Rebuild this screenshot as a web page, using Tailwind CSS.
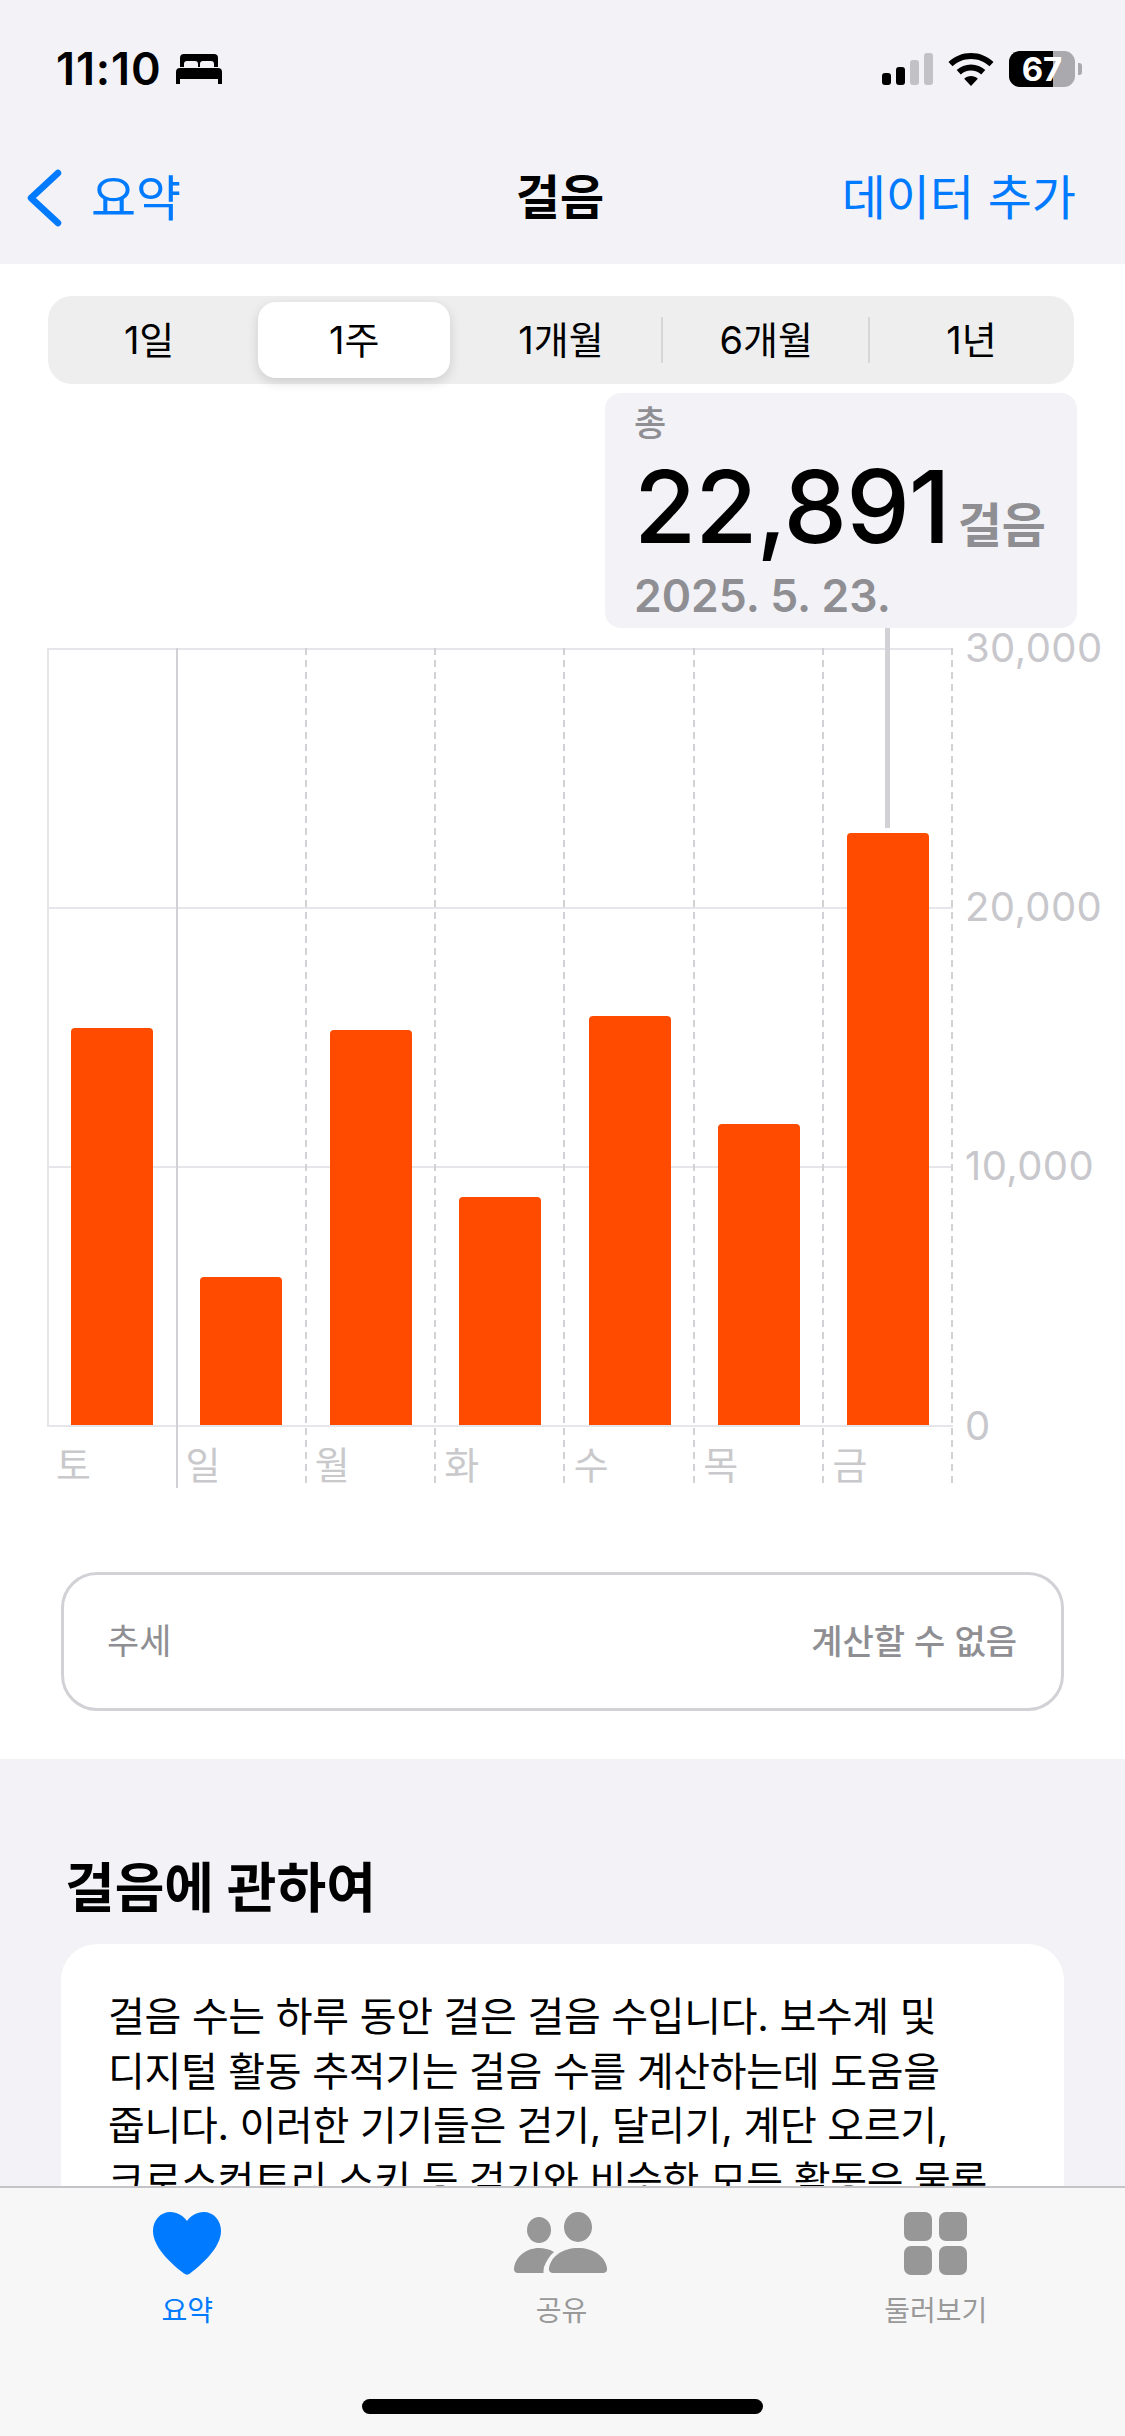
<!DOCTYPE html>
<html lang="ko">

<head>
    <meta charset="UTF-8">
    <meta name="viewport" content="width=device-width, initial-scale=1.0">
    <title>걸음</title>
    <script src="https://cdn.jsdelivr.net/npm/@tailwindcss/browser@4"></script>
</head>

<body class="font-['Inter','Noto_Sans_CJK_KR',sans-serif]">
    <div class="relative w-[1125px] h-[2436px] overflow-hidden bg-[#f2f2f7]">

        <!-- status bar + nav -->
        <header class="h-[264px]">
            <div class="h-[134px] pt-[49px] pl-[56px] pr-[43px] flex justify-between items-start">
                <div class="flex items-center gap-[14px] h-[40px]">
                    <span class="text-[45px] leading-[40px] font-semibold tracking-[0.02em] text-black">11:10</span>
                    <svg width="46" height="30" viewBox="0 0 46 30" fill="#000">
                        <path d="M8 0h30a4 4 0 0 1 4 4v9h-4v-3a3 3 0 0 0-3-3H27a3 3 0 0 0-3 3v3h-2v-3a3 3 0 0 0-3-3H11a3 3 0 0 0-3 3v3H4V4a4 4 0 0 1 4-4z" />
                        <path d="M4 14h38a4 4 0 0 1 4 4v12h-4v-5H4v5H0V18a4 4 0 0 1 4-4z" />
                    </svg>
                </div>
                <div class="flex items-center gap-[15px] pt-[2px]">
                    <div class="flex items-end gap-[5px] h-[32px]">
                        <div class="w-[9px] h-[12px] rounded-[3px] bg-black"></div>
                        <div class="w-[9px] h-[18px] rounded-[3px] bg-black"></div>
                        <div class="w-[9px] h-[25px] rounded-[3px] bg-[#c1c1c6]"></div>
                        <div class="w-[9px] h-[32px] rounded-[3px] bg-[#c1c1c6]"></div>
                    </div>
                    <svg width="46" height="33" viewBox="0 0 46 33" fill="#000">
                        <path d="M23 0c8.700 0 16.600 3.400 22.500 9l-4 4.300C36.700 8.800 30.200 6 23 6S9.300 8.800 4.500 13.300l-4-4.300C6.400 3.400 14.300 0 23 0z" />
                        <path d="M23 11.500c5.500 0 10.500 2.100 14.300 5.600l-4.100 4.300C30.500 18.900 26.900 17.500 23 17.500s-7.500 1.400-10.200 3.900l-4.100-4.300c3.800-3.500 8.800-5.600 14.300-5.600z" />
                        <path d="M23 23c2.600 0 5 1 6.800 2.700L23 33l-6.800-7.300C18 24 20.400 23 23 23z" />
                    </svg>
                    <div class="flex items-center gap-[3px]">
                        <div class="relative w-[66px] h-[36px] rounded-[11px] bg-[#a9a9ae] flex items-center justify-center">
                            <div class="absolute inset-y-0 left-0 w-[44px] rounded-l-[11px] bg-black"></div>
                            <span class="relative text-[33px] leading-none font-bold text-white">67</span>
                        </div>
                        <div class="w-[4px] h-[12px] rounded-r-[3px] bg-[#a9a9ae]"></div>
                    </div>
                </div>
            </div>
            <nav class="h-[128px] grid grid-cols-3 items-center pl-[25px] pr-[49px]">
                <div class="flex items-center gap-[29px] text-[#007aff]">
                    <svg width="37" height="58" viewBox="0 0 37 58" fill="none" stroke="#007aff" stroke-width="6.500" stroke-linecap="round" stroke-linejoin="round">
                        <path d="M33 4 L6 29 L33 54" />
                    </svg>
                    <span class="text-[49px] leading-none">요약</span>
                </div>
                <div class="text-center text-[48px] leading-none font-semibold text-black pl-[19px]">걸음</div>
                <div class="text-right text-[48px] leading-none text-[#007aff] whitespace-nowrap">데이터 추가</div>
            </nav>
        </header>

        <!-- white chart section -->
        <section class="bg-white pt-[32px] pb-[48px]">
            <div class="relative ml-[48px] w-[1026px] h-[88px] rounded-[24px] bg-[#eeeeef] grid grid-cols-5 items-center text-center text-[38px] text-black">
                <div class="pr-[3px]">1일</div>
                <div class="relative h-full flex items-center justify-center pr-[3px]">
                    <div class="absolute inset-y-[6px] left-[5px] right-[8px] rounded-[18px] bg-white shadow-[0_4px_12px_rgba(0,0,0,0.14)]"></div>
                    <span class="relative">1주</span>
                </div>
                <div>1개월</div>
                <div>6개월</div>
                <div>1년</div>
                <div class="absolute left-[613px] top-[21px] w-[2px] h-[46px] bg-[#d6d6d9]"></div>
                <div class="absolute left-[820px] top-[21px] w-[2px] h-[46px] bg-[#d6d6d9]"></div>
            </div>

            <div class="relative mt-[264px] ml-[47px] w-[906px] h-[840px]">
                <svg class="absolute inset-0 overflow-visible" width="906" height="840" viewBox="0 0 906 840" fill="none">
                    <path d="M0 1H906M0 260H906M0 519H906M0 778H906M1 0V778" stroke="#e5e5ea" stroke-width="2" />
                    <path d="M130 0V840" stroke="#d1d1d6" stroke-width="2" />
                    <path d="M259 0V840M388 0V840M517 0V840M647 0V840M776 0V840M905 0V840" stroke="#d1d1d6" stroke-width="2" stroke-dasharray="7 5" />
                </svg>

                <div class="absolute inset-x-0 top-0 h-[777px] grid grid-cols-7 items-end">
                    <div class="flex justify-center"><div class="w-[82px] h-[397px] rounded-t-[4px] bg-[#ff4b00]"></div></div>
                    <div class="flex justify-center"><div class="w-[82px] h-[148px] rounded-t-[4px] bg-[#ff4b00]"></div></div>
                    <div class="flex justify-center"><div class="w-[82px] h-[395px] rounded-t-[4px] bg-[#ff4b00]"></div></div>
                    <div class="flex justify-center"><div class="w-[82px] h-[228px] rounded-t-[4px] bg-[#ff4b00]"></div></div>
                    <div class="flex justify-center pl-[1px]"><div class="w-[82px] h-[409px] rounded-t-[4px] bg-[#ff4b00]"></div></div>
                    <div class="flex justify-center"><div class="w-[82px] h-[301px] rounded-t-[4px] bg-[#ff4b00]"></div></div>
                    <div class="flex justify-center"><div class="w-[82px] h-[592px] rounded-t-[4px] bg-[#ff4b00]"></div></div>
                </div>

                <div class="absolute inset-x-0 top-[795px] grid grid-cols-7 text-[38px] leading-[44px] text-[#c9c9cc]">
                    <div class="pl-[9px]">토</div>
                    <div class="pl-[9px]">일</div>
                    <div class="pl-[9px]">월</div>
                    <div class="pl-[9px]">화</div>
                    <div class="pl-[9px]">수</div>
                    <div class="pl-[9px]">목</div>
                    <div class="pl-[9px]">금</div>
                </div>

                <div class="absolute left-[918px] top-[-22px] text-[40px] leading-[44px] tracking-[0.01em] text-[#c7c7cc]">30,000</div>
                <div class="absolute left-[918px] top-[237px] text-[40px] leading-[44px] tracking-[0.01em] text-[#c7c7cc]">20,000</div>
                <div class="absolute left-[918px] top-[496px] text-[40px] leading-[44px] tracking-[0.01em] text-[#c7c7cc]">10,000</div>
                <div class="absolute left-[918px] top-[756px] text-[40px] leading-[44px] tracking-[0.01em] text-[#c7c7cc]">0</div>

                <!-- selected day callout -->
                <div class="absolute left-[838px] top-[-20px] w-[5px] h-[200px] bg-[#d1d1d6]"></div>
                <div class="absolute left-[558px] top-[-255px] w-[472px] h-[235px] rounded-[16px] bg-[#f2f2f7] px-[29px] pt-[10px]">
                    <div class="text-[35px] leading-[40px] font-medium text-[#8e8e93]">총</div>
                    <div class="flex items-baseline gap-[8px] mt-[7px] h-[112px] whitespace-nowrap">
                        <span class="text-[101px] leading-[112px] font-medium tracking-[-0.01em] text-black">22,891</span>
                        <span class="text-[48px] leading-none font-semibold text-[#8e8e93]">걸음</span>
                    </div>
                    <div class="text-[44.500px] leading-[50px] font-semibold text-[#8e8e93] mt-[9px]">2025. 5. 23.</div>
                </div>
            </div>

            <div class="mt-[84px] mx-[61px] h-[139px] rounded-[36px] border-[3px] border-[#d1d1d6] pl-[43px] pr-[44px] flex items-center justify-between text-[#8e8e93]">
                <span class="text-[35px]">추세</span>
                <span class="text-[34px] font-medium">계산할 수 없음</span>
            </div>
        </section>

        <!-- about -->
        <section class="pt-[95px]">
            <h2 class="ml-[65px] text-[54px] leading-[70px] font-bold text-black">걸음에 관하여</h2>
            <div class="mt-[20px] mx-[61px] rounded-t-[36px] bg-white px-[47px] pt-[46px] h-[600px] text-[40px] leading-[54.500px] tracking-[-0.008em] text-black whitespace-nowrap">
                걸음 수는 하루 동안 걸은 걸음 수입니다. 보수계 및<br>
                디지털 활동 추적기는 걸음 수를 계산하는데 도움을<br>
                줍니다. 이러한 기기들은 걷기, 달리기, 계단 오르기,<br>
                크로스컨트리 스키 등 걷기와 비슷한 모든 활동은 물론
            </div>
        </section>

        <!-- tab bar -->
        <div class="absolute inset-x-0 bottom-0 h-[250px] border-t-2 border-[#c4c4c8] bg-[#f7f7f8] grid grid-cols-3 pt-[24px] pr-[2px]">
            <div class="flex flex-col items-center text-[#007aff]">
                <svg width="68" height="63" viewBox="0 0 68 63" fill="#007aff">
                    <path d="M34 9C30 3.500 24 0 17.500 0 7.500 0 0 8 0 19 0 36 20 53 31 61.500 33 63 35 63 37 61.500 48 53 68 36 68 19 68 8 60.500 0 50.500 0 44 0 38 3.500 34 9z" />
                </svg>
                <span class="text-[28px] leading-[36px] mt-[18px]">요약</span>
            </div>
            <div class="flex flex-col items-center text-[#999999]">
                <svg width="94" height="63" viewBox="0 0 94 63" fill="#979797">
                    <ellipse cx="25" cy="18" rx="12" ry="13" />
                    <ellipse cx="64" cy="15" rx="14" ry="15" />
                    <path d="M4 61c-3 0-4-2-4-4C1 45 12 36 25 36c5 0 10 1 15 4-5 4-8 10-10 15-.5 2-.5 4-.5 6z" />
                    <path d="M40 61c-4 0-5.500-2-5-5C37 44 49 36 64 36s27 8 29 20c.5 3-1 5-5 5z" />
                </svg>
                <span class="text-[28px] leading-[36px] mt-[18px]">공유</span>
            </div>
            <div class="flex flex-col items-center text-[#999999]">
                <div class="grid grid-cols-2 gap-x-[7px] gap-y-[5px] w-[63px] h-[63px]">
                    <div class="rounded-[7px] bg-[#979797]"></div>
                    <div class="rounded-[7px] bg-[#979797]"></div>
                    <div class="rounded-[7px] bg-[#979797]"></div>
                    <div class="rounded-[7px] bg-[#979797]"></div>
                </div>
                <span class="text-[28px] leading-[36px] mt-[18px]">둘러보기</span>
            </div>
            <div class="absolute left-[362px] top-[211px] w-[401px] h-[15px] rounded-full bg-black"></div>
        </div>
    </div>
</body>

</html>
